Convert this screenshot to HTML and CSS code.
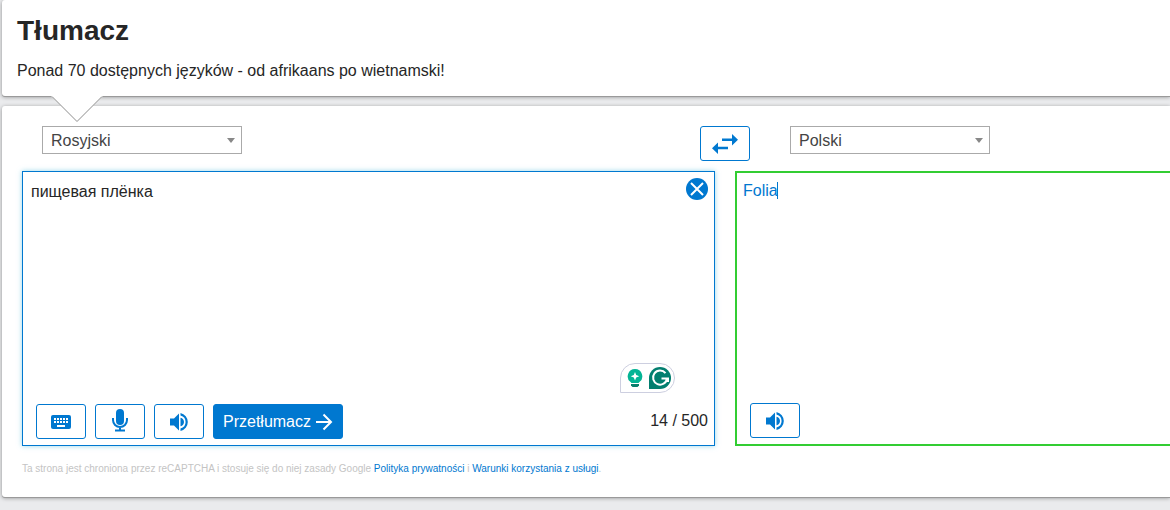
FILE: index.html
```html
<!DOCTYPE html>
<html lang="pl">
<head>
<meta charset="utf-8">
<title>Tłumacz</title>
<link rel="stylesheet" href="styles.css">
</head>
<body>
<svg class="sprite" aria-hidden="true">
  <symbol id="speaker" viewBox="0 0 24 24"><path d="M3 8.500v7h4l5 5v-17l-5 5H3zM17 12a4.500 4.500 0 0 0-3.500-4.200v8.400A4.500 4.500 0 0 0 17 12zM13.500 3v2.500a6.700 6.700 0 0 1 0 13V21a9.200 9.200 0 0 0 0-18z"/></symbol>
</svg>
<header class="card intro">
  <h1 class="title">Tłumacz</h1>
  <p class="lead">Ponad 70 dostępnych języków - od afrikaans po wietnamski!</p>
  <svg class="pointer" viewBox="0 0 52 27" aria-hidden="true"><path class="pointer-fill" d="M0 0H52L26 26Z"/><path class="pointer-line" d="M1 .5L26 25.500 51 .5"/></svg>
</header>
<main class="card translator">
  <div class="columns languages">
    <div class="source-language">
      <div class="picker">
        <select class="select" aria-label="Język źródłowy"><option>Rosyjski</option></select>
      </div>
      <button class="button" type="button" aria-label="Zamień języki">
        <svg class="swap-icon" viewBox="0 0 26 20" aria-hidden="true"><path d="M10 4.500h10V0l6 5.800-6 5.800V7H10zM16 12.800H6V8.400l-6 5.800L6 20v-4.700h10z"/></svg>
      </button>
    </div>
    <div class="target-language">
      <div class="picker">
        <select class="select" aria-label="Język docelowy"><option>Polski</option></select>
      </div>
    </div>
  </div>
  <div class="columns">
    <section class="pane source">
      <textarea class="text" aria-label="Tekst do przetłumaczenia" spellcheck="false">пищевая плёнка</textarea>
      <button class="clear" type="button" aria-label="Wyczyść">
        <svg viewBox="0 0 22 22" aria-hidden="true"><circle cx="11" cy="11" r="11"/><path d="M5 5l12 12M17 5L5 17"/></svg>
      </button>
      <div class="assistant">
        <svg class="bulb" viewBox="0 0 16 20" aria-hidden="true"><path class="bulb-glass" d="M8 1a7.300 7.300 0 0 1 4.400 13.100L11.500 15h-7l-.9-.9A7.300 7.300 0 0 1 8 1z"/><path class="spark" d="M8 4l1.200 3.100 3.100 1.200-3.100 1.200L8 12.600 6.800 9.500 3.700 8.300l3.100-1.200z"/><path class="bulb-base" d="M4 16h8v1.500l-1.500 1.500h-5L4 17.500z"/></svg>
        <svg class="gmark" viewBox="0 0 22 22" aria-hidden="true"><path class="gmark-back" d="M11 0a11 11 0 0 1 0 22H0V11A11 11 0 0 1 11 0z"/><path class="gmark-line" d="M16.500 6.200a7 7 0 1 0 1.500 5.300H12.500M15 11.500h4v3.500"/></svg>
      </div>
      <div class="toolbar">
        <button class="button" type="button" aria-label="Klawiatura">
          <svg class="keyboard" viewBox="0 0 20 14" aria-hidden="true"><rect width="20" height="14" rx="2"/><path d="M3 4h14M3 7h14"/><path class="spacebar" d="M6 11h8"/></svg>
        </button>
        <button class="button" type="button" aria-label="Mikrofon">
          <svg class="mic" viewBox="0 0 18 24" aria-hidden="true"><rect x="5" y="1" width="8" height="16" rx="4"/><path d="M2 10v2a7 7 0 0 0 14 0v-2M9 18v4M4 22.500h10"/></svg>
        </button>
        <button class="button" type="button" aria-label="Odsłuchaj tekst">
          <svg class="speaker" aria-hidden="true"><use href="#speaker"/></svg>
        </button>
        <button class="button submit" type="submit">Przetłumacz
          <svg class="arrow" viewBox="0 0 18 18" aria-hidden="true"><path d="M1 9h15M8.500 1.500L16 9l-7.500 7.500"/></svg>
        </button>
        <span class="counter">14 / 500</span>
      </div>
    </section>
    <section class="pane target">
      <textarea class="text" aria-label="Tłumaczenie" spellcheck="false">Folia</textarea>
      <span class="caret"></span>
      <div class="toolbar">
        <button class="button" type="button" aria-label="Odsłuchaj tłumaczenie">
          <svg class="speaker" aria-hidden="true"><use href="#speaker"/></svg>
        </button>
      </div>
    </section>
  </div>
  <p class="notice">Ta strona jest chroniona przez reCAPTCHA i stosuje się do niej zasady Google <a href="#">Polityka prywatności</a> i <a href="#">Warunki korzystania z usługi</a>.</p>
</main>
</body>
</html>
```
FILE: styles.css
```css
* {
  box-sizing: border-box;
}

body {
  margin: 0;
  padding: 0 0 12px 2px;
  background: #eaebed;
  color: #262626;
  font: 16px/20px "Liberation Sans", Arial, sans-serif;
}

.sprite {
  position: absolute;
  width: 0;
  height: 0;
}

.card {
  position: relative;
  background: #fff;
  border-radius: 3px 0 0 3px;
  box-shadow: 0 1px 0 #9a9a9a, 0 1px 4px rgba(0, 0, 0, 0.4);
}

.intro {
  z-index: 1;
  margin-bottom: 10px;
  padding: 15px 15px 15px;
}

.title {
  margin: 0 0 14px;
  font-size: 28px;
  line-height: 32px;
}

.lead {
  margin: 0;
}

.pointer {
  position: absolute;
  left: 49px;
  top: 100%;
  width: 52px;
  height: 27px;
}

.pointer-fill {
  fill: #fff;
}

.pointer-line {
  fill: none;
  stroke: #8c8c8c;
}

.translator {
  padding: 20px 0 20px 20px;
}

.columns {
  display: grid;
  grid-template-columns: 693fr 435fr;
  column-gap: 20px;
}

.languages {
  margin-bottom: 10px;
}

.source-language {
  display: flex;
  justify-content: space-between;
  align-items: flex-start;
  margin-right: -35px;
  padding-left: 20px;
}

.target-language {
  padding-left: 55px;
}

.picker {
  position: relative;
  width: 200px;
}

.picker::after {
  content: "";
  position: absolute;
  right: 7px;
  top: 12px;
  border: 4px solid transparent;
  border-top: 5px solid #888;
  border-bottom: 0;
  pointer-events: none;
}

.select {
  display: block;
  width: 100%;
  height: 28px;
  padding: 2px 8px 0;
  appearance: none;
  border: 1px solid #aaa;
  border-radius: 0;
  background: #fff;
  color: #444;
  font: inherit;
}

.button {
  display: flex;
  align-items: center;
  justify-content: center;
  width: 50px;
  height: 35px;
  padding: 0;
  border: 1px solid #0078d0;
  border-radius: 3px;
  background: #fff;
  color: #0078d0;
  fill: currentColor;
  font: inherit;
}

.swap-icon {
  width: 26px;
  height: 20px;
}

.pane {
  position: relative;
  display: flex;
  flex-direction: column;
  min-width: 0;
  height: 275px;
}

.source {
  border: 1px solid #0078d0;
  box-shadow: 0 0 5px rgba(81, 190, 220, 0.6);
}

.target {
  border: 2px solid #32cd32;
  border-right: 0;
}

.text {
  flex: 1;
  width: 100%;
  min-height: 0;
  padding: 10px 8px;
  border: 0;
  outline: 0;
  resize: none;
  background: none;
  color: inherit;
  font: inherit;
}

.target .text {
  padding: 8px 6px;
  color: #0078d0;
}

.caret {
  position: absolute;
  left: 40px;
  top: 9px;
  width: 1px;
  height: 17px;
  background: #0078d0;
}

.clear {
  position: absolute;
  right: 6px;
  top: 6px;
  width: 22px;
  height: 22px;
  padding: 0;
  border: 0;
  background: none;
  fill: #0078d0;
  stroke-width: 2;
}

.clear svg {
  display: block;
}

.clear path {
  stroke: #fff;
}

.assistant {
  position: absolute;
  right: 39px;
  bottom: 52px;
  display: flex;
  align-items: center;
  gap: 6px;
  width: 55px;
  height: 30px;
  padding-left: 6px;
  border: 1px solid #cdcfe0;
  border-radius: 15px 15px 15px 0;
  background: #fff;
}

.bulb {
  width: 16px;
  height: 20px;
}

.bulb-glass {
  fill: #04b495;
}

.bulb-base {
  fill: #087f6c;
}

.spark {
  fill: #fff;
}

.gmark {
  width: 22px;
  height: 22px;
}

.gmark-back {
  fill: #027e6f;
}

.gmark-line {
  fill: none;
  stroke: #fff;
  stroke-width: 2;
}

.toolbar {
  display: flex;
  align-items: center;
  gap: 9px;
  padding: 0 6px 6px 13px;
}

.keyboard {
  width: 20px;
  height: 14px;
}

.keyboard path {
  stroke: #fff;
  stroke-width: 2;
  stroke-dasharray: 2 1;
}

.keyboard .spacebar {
  stroke-dasharray: none;
}

.mic {
  width: 18px;
  height: 24px;
  margin-bottom: 3px;
}

.mic path {
  fill: none;
  stroke: currentColor;
  stroke-width: 2;
}

.speaker {
  width: 24px;
  height: 24px;
}

.submit {
  gap: 4px;
  width: 130px;
  background: #0078d0;
  color: #fff;
}

.arrow {
  width: 18px;
  height: 18px;
  fill: none;
  stroke: currentColor;
  stroke-width: 2;
}

.counter {
  margin-left: auto;
  margin-bottom: 2px;
}

.notice {
  margin: 15px 0 0;
  color: #c4c4c4;
  font-size: 10px;
  line-height: 16px;
}

.notice a {
  color: #0078d0;
  text-decoration: none;
}
```
